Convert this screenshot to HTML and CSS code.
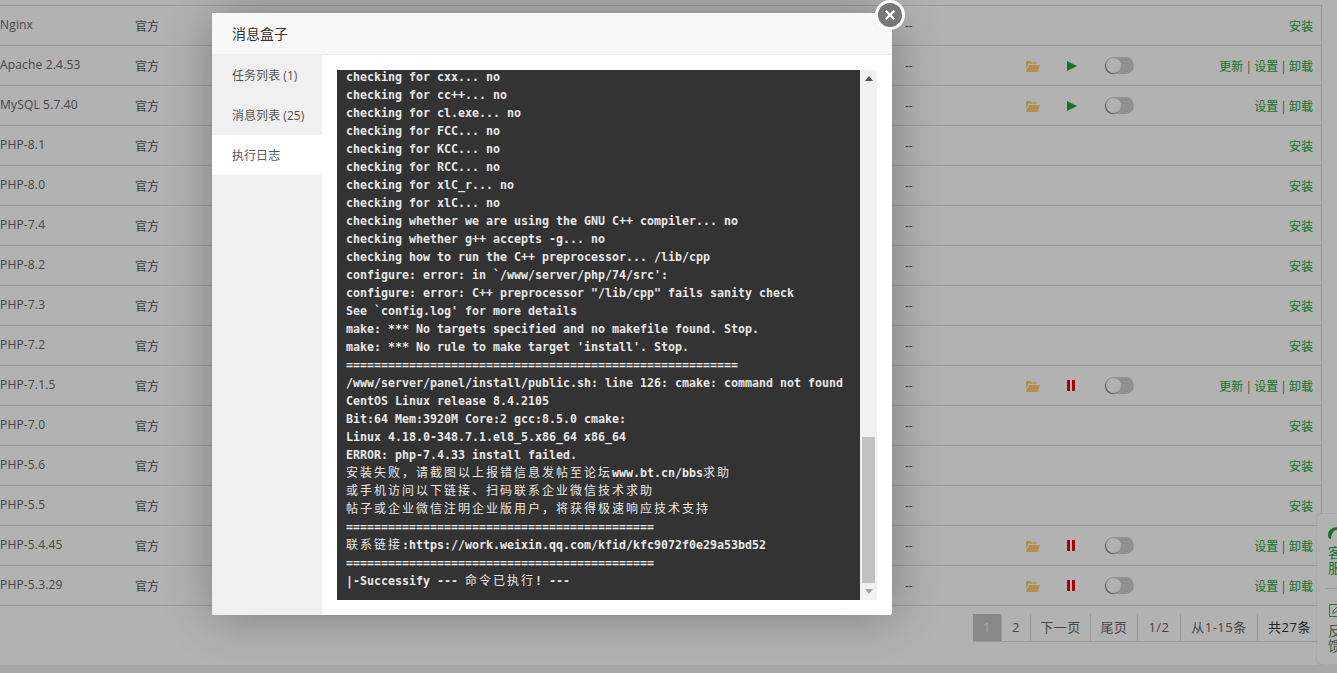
FILE: index.html
```html
<!DOCTYPE html>
<html lang="zh-CN">
<head>
<meta charset="utf-8">
<title>软件商店</title>
<link rel="stylesheet" href="styles.css">
</head>
<body>
<svg class="defs" aria-hidden="true"><defs>
<symbol id="folder" viewBox="0 0 15 12"><path d="M1.2 1h4l1 1.2h5.3v1.6H3.6L1.1 9.6V1.6z"/><path d="M4 5h10.8L12.8 12H0.6z"/></symbol>
<symbol id="play" viewBox="0 0 10 10"><path d="M0 0l10 5-10 5z"/></symbol>
<symbol id="pause" viewBox="0 0 8 11"><path d="M0 0h3v11H0zM5 0h3v11H5z"/></symbol>
</defs></svg>
<div class="page">
  <div class="table">
    <div class="row"><span class="name">Nginx</span><span class="src">官方</span><span class="exp">--</span><span class="act"><a>安装</a></span></div>
    <div class="row"><span class="name">Apache 2.4.53</span><span class="src">官方</span><span class="exp">--</span><span class="ico"><svg class="i-folder"><use href="#folder"/></svg></span><span class="ico"><svg class="i-play"><use href="#play"/></svg></span><span class="ico"><i class="toggle"><b></b></i></span><span class="act"><a>更新</a> | <a>设置</a> | <a>卸载</a></span></div>
    <div class="row"><span class="name">MySQL 5.7.40</span><span class="src">官方</span><span class="exp">--</span><span class="ico"><svg class="i-folder"><use href="#folder"/></svg></span><span class="ico"><svg class="i-play"><use href="#play"/></svg></span><span class="ico"><i class="toggle"><b></b></i></span><span class="act"><a>设置</a> | <a>卸载</a></span></div>
    <div class="row"><span class="name">PHP-8.1</span><span class="src">官方</span><span class="exp">--</span><span class="act"><a>安装</a></span></div>
    <div class="row"><span class="name">PHP-8.0</span><span class="src">官方</span><span class="exp">--</span><span class="act"><a>安装</a></span></div>
    <div class="row"><span class="name">PHP-7.4</span><span class="src">官方</span><span class="exp">--</span><span class="act"><a>安装</a></span></div>
    <div class="row"><span class="name">PHP-8.2</span><span class="src">官方</span><span class="exp">--</span><span class="act"><a>安装</a></span></div>
    <div class="row"><span class="name">PHP-7.3</span><span class="src">官方</span><span class="exp">--</span><span class="act"><a>安装</a></span></div>
    <div class="row"><span class="name">PHP-7.2</span><span class="src">官方</span><span class="exp">--</span><span class="act"><a>安装</a></span></div>
    <div class="row"><span class="name">PHP-7.1.5</span><span class="src">官方</span><span class="exp">--</span><span class="ico"><svg class="i-folder"><use href="#folder"/></svg></span><span class="ico"><svg class="i-pause"><use href="#pause"/></svg></span><span class="ico"><i class="toggle"><b></b></i></span><span class="act"><a>更新</a> | <a>设置</a> | <a>卸载</a></span></div>
    <div class="row"><span class="name">PHP-7.0</span><span class="src">官方</span><span class="exp">--</span><span class="act"><a>安装</a></span></div>
    <div class="row"><span class="name">PHP-5.6</span><span class="src">官方</span><span class="exp">--</span><span class="act"><a>安装</a></span></div>
    <div class="row"><span class="name">PHP-5.5</span><span class="src">官方</span><span class="exp">--</span><span class="act"><a>安装</a></span></div>
    <div class="row"><span class="name">PHP-5.4.45</span><span class="src">官方</span><span class="exp">--</span><span class="ico"><svg class="i-folder"><use href="#folder"/></svg></span><span class="ico"><svg class="i-pause"><use href="#pause"/></svg></span><span class="ico"><i class="toggle"><b></b></i></span><span class="act"><a>设置</a> | <a>卸载</a></span></div>
    <div class="row"><span class="name">PHP-5.3.29</span><span class="src">官方</span><span class="exp">--</span><span class="ico"><svg class="i-folder"><use href="#folder"/></svg></span><span class="ico"><svg class="i-pause"><use href="#pause"/></svg></span><span class="ico"><i class="toggle"><b></b></i></span><span class="act"><a>设置</a> | <a>卸载</a></span></div>
    <div class="pager"><span class="on">1</span><span>2</span><span>下一页</span><span>尾页</span><span>1/2</span><span>从1-15条</span><span class="total">共27条</span></div>
  </div>
</div>
<aside class="float">
  <svg class="f-ico" viewBox="0 0 18 12"><path d="M0 8C0 3 4 0 10 0c3 0 6 1 8 3-4-1-9-1-12 1C4 6 3 9 3 12 1 12 0 10 0 8z"/></svg>
  <div class="f-text">客<br>服</div>
  <div class="f-sep"></div>
  <svg class="f-ico2" viewBox="0 0 14 14"><path d="M.5.5h13v13H.5zM4 10l1-3 5-5 2 2-5 5z" fill="none" stroke="currentColor"/></svg>
  <div class="f-text gray">反<br>馈</div>
</aside>
<div class="shade"></div>
<section class="modal">
  <header class="m-title">消息盒子</header>
  <div class="m-body">
    <nav class="m-side">
      <div class="m-item">任务列表 (1)</div>
      <div class="m-item">消息列表 (25)</div>
      <div class="m-item active">执行日志</div>
    </nav>
    <div class="m-main">
      <div class="term">
<pre class="log">checking for cxx... no
checking for cc++... no
checking for cl.exe... no
checking for FCC... no
checking for KCC... no
checking for RCC... no
checking for xlC_r... no
checking for xlC... no
checking whether we are using the GNU C++ compiler... no
checking whether g++ accepts -g... no
checking how to run the C++ preprocessor... /lib/cpp
configure: error: in `/www/server/php/74/src':
configure: error: C++ preprocessor "/lib/cpp" fails sanity check
See `config.log' for more details
make: *** No targets specified and no makefile found. Stop.
make: *** No rule to make target 'install'. Stop.
========================================================
/www/server/panel/install/public.sh: line 126: cmake: command not found
CentOS Linux release 8.4.2105
Bit:64 Mem:3920M Core:2 gcc:8.5.0 cmake:
Linux 4.18.0-348.7.1.el8_5.x86_64 x86_64
ERROR: php-7.4.33 install failed.
<span class="cjk">安装失败，请截图以上报错信息发帖至论坛</span>www.bt.cn/bbs<span class="cjk">求助</span>
<span class="cjk">或手机访问以下链接、扫码联系企业微信技术求助</span>
<span class="cjk">帖子或企业微信注明企业版用户，将获得极速响应技术支持</span>
============================================
<span class="cjk">联系链接</span>:https://work.weixin.qq.com/kfid/kfc9072f0e29a53bd52
============================================
|-Successify --- <span class="cjk">命令已执行</span>! ---</pre>
      </div>
      <div class="sbar">
        <span class="arrow up"></span>
        <div class="track"><div class="thumb"></div></div>
        <span class="arrow down"></span>
      </div>
    </div>
  </div>
  <button class="close" aria-label="关闭"><svg viewBox="0 0 14 14"><path d="M2 2l10 10M12 2L2 12"/></svg></button>
</section>
</body>
</html>
```
FILE: styles.css
```css
* { box-sizing: border-box; }
html, body { margin: 0; height: 100%; overflow: hidden; }
body {
  background: #f0f0f0;
  font-family: "Open Sans", "Noto Sans CJK SC", sans-serif;
  font-size: 12px;
  color: #666;
}
.defs { width: 0; height: 0; display: block; position: absolute; }
.page { padding-top: 5px; height: 665px; background: #fff; }
.table { width: 1322px; border-right: 1px solid #ddd; height: 100%; border-top: 1px solid #ddd; }
.row {
  display: grid;
  grid-template-columns: 135px 770px 120px 40px 40px 40px 1fr;
  height: 40px;
  align-items: center;
  border-bottom: 1px solid #ddd;
  padding-right: 8px;
}
.row > .act { grid-column: 7; text-align: right; color: #8a6d3b; word-spacing: -1px; }
.name { line-height: 1; position: relative; top: -1px; letter-spacing: .17px; }
.src { color: #555; }
.exp { color: #555; }
.act a { color: #20a53a; }
.ico { display: flex; align-items: center; }
.i-folder { width: 15px; height: 12px; fill: #f8cf72; }
.i-play { width: 10px; height: 10px; fill: #20a53a; margin-left: 2px; }
.i-pause { width: 8px; height: 11px; fill: #ee0018; margin-left: 2px; }
.toggle {
  display: block; width: 29px; height: 17px; border-radius: 9px;
  background: #cecece; padding: 1px;
}
.toggle b {
  display: block; width: 15px; height: 15px; border-radius: 50%;
  background: #fff; box-shadow: -1px 1px 1px #888;
}
.pager { display: flex; margin-top: 8px; height: 28px; font-size: 13px; border-bottom: 1px solid #ddd; width: 348px; margin-left: auto; letter-spacing: .5px; }
.pager span { flex: none; width: 29px; text-align: center; line-height: 27px; border-right: 1px solid #ddd; color: #666; }
.pager span:nth-child(3) { width: 60px; }
.pager span:nth-child(4) { width: 47px; }
.pager span:nth-child(5) { width: 43px; }
.pager span:nth-child(6) { width: 77px; }
.pager span:nth-child(7) { width: 63px; border-right: 0; }
.pager .on { background: #c4c4c4; color: #eee; }
.pager .total { color: #333; }
.float {
  position: absolute; left: 1317px; top: 514px; width: 40px; height: 150px;
  background: #fff; border-radius: 4px; padding: 13px 0 0 11px; color: #20a53a;
  box-shadow: 0 0 2px #ccc;
}
.f-ico { display: block; width: 18px; height: 12px; fill: #20a53a; margin-bottom: 6px; }
.f-ico2 { display: block; width: 13px; height: 13px; margin: 15px 0 6px 1px; }
.f-text { font-size: 14px; line-height: 15px; width: 14px; color: #20a53a; }
.f-sep { width: 30px; height: 1px; background: #ddd; margin: 13px 0 0 -2px; }
.f-text.gray { color: #5d7d64; }
.shade { position: fixed; inset: 0; background: rgba(0,0,0,.3); }
.modal {
  position: fixed; left: 212px; top: 13px; width: 680px; height: 602px;
  background: #fff; box-shadow: 1px 1px 50px rgba(0,0,0,.3);
  display: flex; flex-direction: column; border-radius: 2px;
}
.m-title {
  height: 42px; padding-left: 20px; line-height: 41px; font-size: 14px; color: #333;
  background: #f8f8f8; border-bottom: 1px solid #eee; flex: none;
}
.m-body { flex: 1; display: flex; min-height: 0; }
.m-side { width: 110px; background: #f0f0f0; flex: none; }
.m-item { height: 40px; line-height: 41px; padding-left: 20px; color: #555; letter-spacing: .05px; }
.m-item.active { background: #fff; }
.m-main { flex: 1; padding: 15px; display: flex; min-width: 0; }
.term { width: 523px; background: #333; overflow: hidden; }
.log {
  margin: -2px 0 0; padding-left: 9px;
  font-family: "DejaVu Sans Mono", monospace; font-size: 11.63px; font-weight: 700;
  line-height: 18px; color: #e8e8e8; white-space: pre;
}
.cjk { font-family: "Noto Sans CJK SC", sans-serif; font-weight: 400; font-size: 12px; letter-spacing: 2px; line-height: 0; }
.sbar { width: 17px; background: #f1f1f1; display: flex; flex-direction: column; align-items: center; }
.arrow { flex: none; height: 17px; width: 100%; position: relative; display: flex; align-items: center; justify-content: center; }
.arrow::before { content: ""; border: 4px solid transparent; }
.arrow.up::before { border-bottom: 5px solid #505050; border-top: 0; }
.arrow.down::before { border-top: 5px solid #a3a3a3; border-bottom: 0; }
.track { flex: 1; width: 100%; display: flex; flex-direction: column; justify-content: flex-end; }
.thumb { height: 146px; margin: 0 2px 0 2px; background: #c1c1c1; }
.close {
  position: absolute; right: -13px; top: -13px; width: 30px; height: 30px; padding: 6px;
  border-radius: 50%; border: 3px solid #fff; background: #777; display: flex;
}
.close svg { width: 12px; height: 12px; fill: none; stroke: #fff; stroke-width: 2.6; }
```
